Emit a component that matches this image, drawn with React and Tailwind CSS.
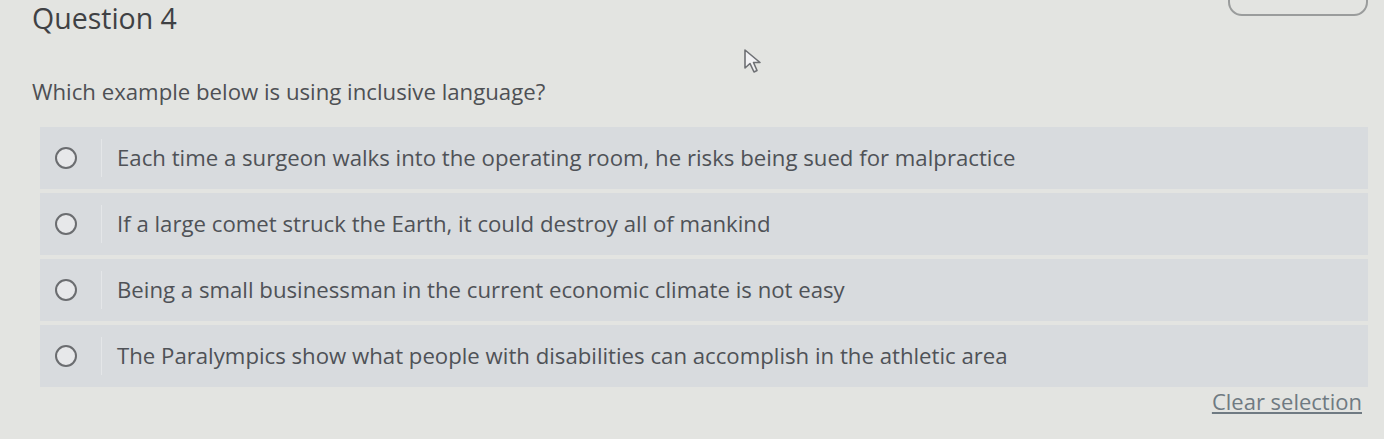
const options = [
  "Each time a surgeon walks into the operating room, he risks being sued for malpractice",
  "If a large comet struck the Earth, it could destroy all of mankind",
  "Being a small businessman in the current economic climate is not easy",
  "The Paralympics show what people with disabilities can accomplish in the athletic area",
];

export default function App() {
  return (
    <div
      className="relative h-[439px] w-full overflow-hidden bg-[#e3e4e1] text-[#4b4d50]"
      style={{ fontFamily: '"Open Sans", "Liberation Sans", sans-serif' }}
    >
      {/* partially visible button at top right */}
      <div className="absolute right-[16px] top-[-30px] h-[46px] w-[140px] rounded-[14px] border-2 border-[#9a9c9c]" />

      {/* mouse pointer */}
      <svg className="absolute left-[743px] top-[48px]" width="22" height="28" viewBox="0 0 22 28">
        <path
          d="M2 2 L2 20 L7 15.5 L11 24 L14 22.5 L10.5 14.5 L17 14.5 Z"
          fill="#f2f2f4"
          stroke="#6e7074"
          strokeWidth="1.6"
          strokeLinejoin="round"
        />
      </svg>

      <div className="pl-[32px] pr-[16px]">
        <h1 className="pt-[1px] text-[28.5px] font-medium leading-[34px] text-[#3f4144]">Question 4</h1>
        <p className="mt-[42px] text-[22.2px] leading-[30px] text-[#4e5054]">
          Which example below is using inclusive language?
        </p>

        <div className="mt-[20px] ml-[8px] flex flex-col gap-[4px]">
          {options.map((o, i) => (
            <div key={i} className="flex h-[62px] items-center bg-[#d8dbde]">
              <div className="ml-[15px] h-[22px] w-[22px] rounded-full border-[2.5px] border-[#6b6d70] bg-[#e7e8ea]" />
              <div className="ml-[24px] h-[38px] w-px bg-[#e4e6e8]" />
              <span className="ml-[15px] text-[22.2px] leading-[30px] text-[#4f5257]">{o}</span>
            </div>
          ))}
        </div>

        <div className="flex justify-end pr-[6px]">
          <a className="text-[22px] leading-[28px] text-[#6f7a82] underline">Clear selection</a>
        </div>
      </div>
    </div>
  );
}
